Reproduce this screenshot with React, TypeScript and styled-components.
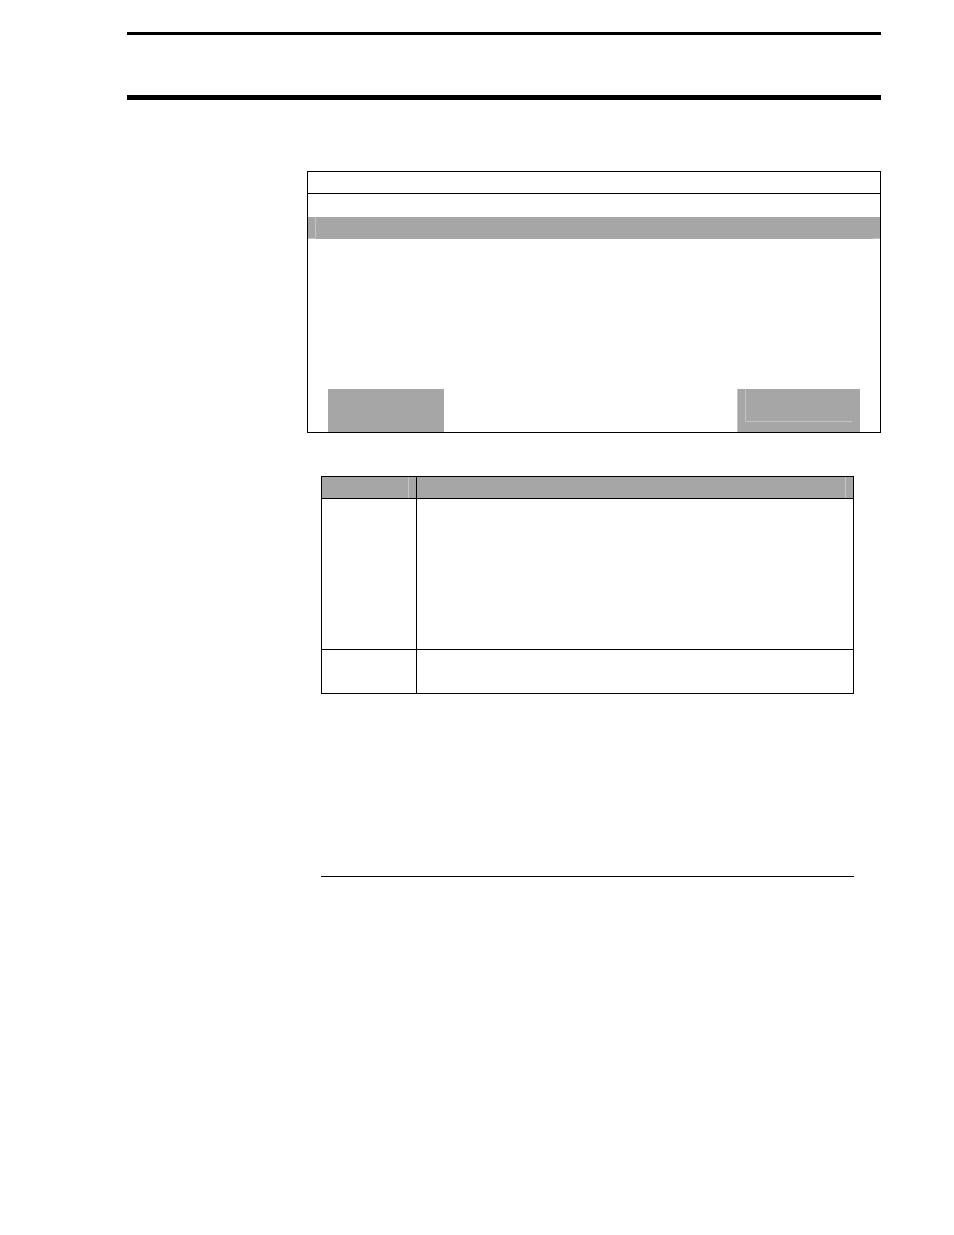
import React from "react";
import styled, { createGlobalStyle } from "styled-components";

const ink = "#000000";
const grey = "#a6a6a6";
const pale = "#c4c4c4";

const GlobalStyle = createGlobalStyle`
  *, *::before, *::after { box-sizing: border-box; }
  body {
    margin: 0;
    background: #ffffff;
    color: ${ink};
    font-family: "Liberation Sans", Arial, sans-serif;
  }
`;

const Page = styled.div`
  min-height: 100vh;
  padding: 32px 73px 32px 127px;
`;

const PageHeader = styled.header`
  height: 68px;
  border-top: 3px solid ${ink};
  border-bottom: 5px solid ${ink};
`;

const Content = styled.main`
  margin: 71px 0 0 180px;
`;

const Screen = styled.section`
  display: flex;
  flex-direction: column;
  border: 1px solid ${ink};
`;

const TitleBar = styled.div`
  height: 22px;
  border-bottom: 1px solid ${ink};
`;

const HighlightRow = styled.div`
  display: flex;
  justify-content: space-between;
  height: 22px;
  margin-top: 23px;
  background: ${grey};
`;

const RowEdge = styled.div<{ $divided?: boolean }>`
  width: ${(p) => (p.$divided ? 8 : 7)}px;
  border-bottom: 1px solid ${pale};
  border-right: ${(p) => (p.$divided ? `1px solid ${pale}` : "none")};
`;

const SoftKeys = styled.div`
  display: flex;
  justify-content: space-between;
  margin-top: 150px;
  padding: 0 20px;
`;

const SoftKey = styled.button<{ $framed?: boolean }>`
  width: ${(p) => (p.$framed ? 123 : 116)}px;
  height: 43px;
  padding: 0 8px 10px 7px;
  border: 0;
  border-left: ${(p) => (p.$framed ? `1px solid ${pale}` : "0")};
  border-radius: 0;
  background: ${grey};
`;

const KeyFrame = styled.span`
  display: block;
  height: 33px;
  border-left: 1px solid ${pale};
  border-bottom: 1px solid ${pale};
`;

const Details = styled.section`
  margin: 43px 27px 0 14px;
`;

const KeyTable = styled.table`
  width: 100%;
  border-collapse: collapse;
  table-layout: fixed;

  th, td {
    padding: 0;
    border: 1px solid ${ink};
  }

  th {
    padding-right: 7px;
    background: ${grey};
  }
`;

const KeyColumn = styled.col`
  width: 95px;
`;

const HeadCell = styled.div`
  height: 21px;
  border-right: 1px solid ${pale};
`;

const BodyRow = styled.tr<{ $height: number }>`
  height: ${(p) => p.$height}px;
`;

const SectionRule = styled.hr`
  height: 1px;
  margin: 182px 0 0;
  border: 0;
  background: ${ink};
`;

export default function App() {
  return (
    <>
      <GlobalStyle />
      <Page>
        <PageHeader />
        <Content>
          <Screen>
            <TitleBar />
            <HighlightRow>
              <RowEdge $divided />
              <RowEdge />
            </HighlightRow>
            <SoftKeys>
              <SoftKey type="button" aria-label="Left soft key" />
              <SoftKey type="button" aria-label="Right soft key" $framed>
                <KeyFrame />
              </SoftKey>
            </SoftKeys>
          </Screen>
          <Details>
            <KeyTable>
              <colgroup>
                <KeyColumn />
                <col />
              </colgroup>
              <thead>
                <tr>
                  <th scope="col"><HeadCell /></th>
                  <th scope="col"><HeadCell /></th>
                </tr>
              </thead>
              <tbody>
                <BodyRow $height={151}>
                  <td />
                  <td />
                </BodyRow>
                <BodyRow $height={44}>
                  <td />
                  <td />
                </BodyRow>
              </tbody>
            </KeyTable>
            <SectionRule />
          </Details>
        </Content>
      </Page>
    </>
  );
}
